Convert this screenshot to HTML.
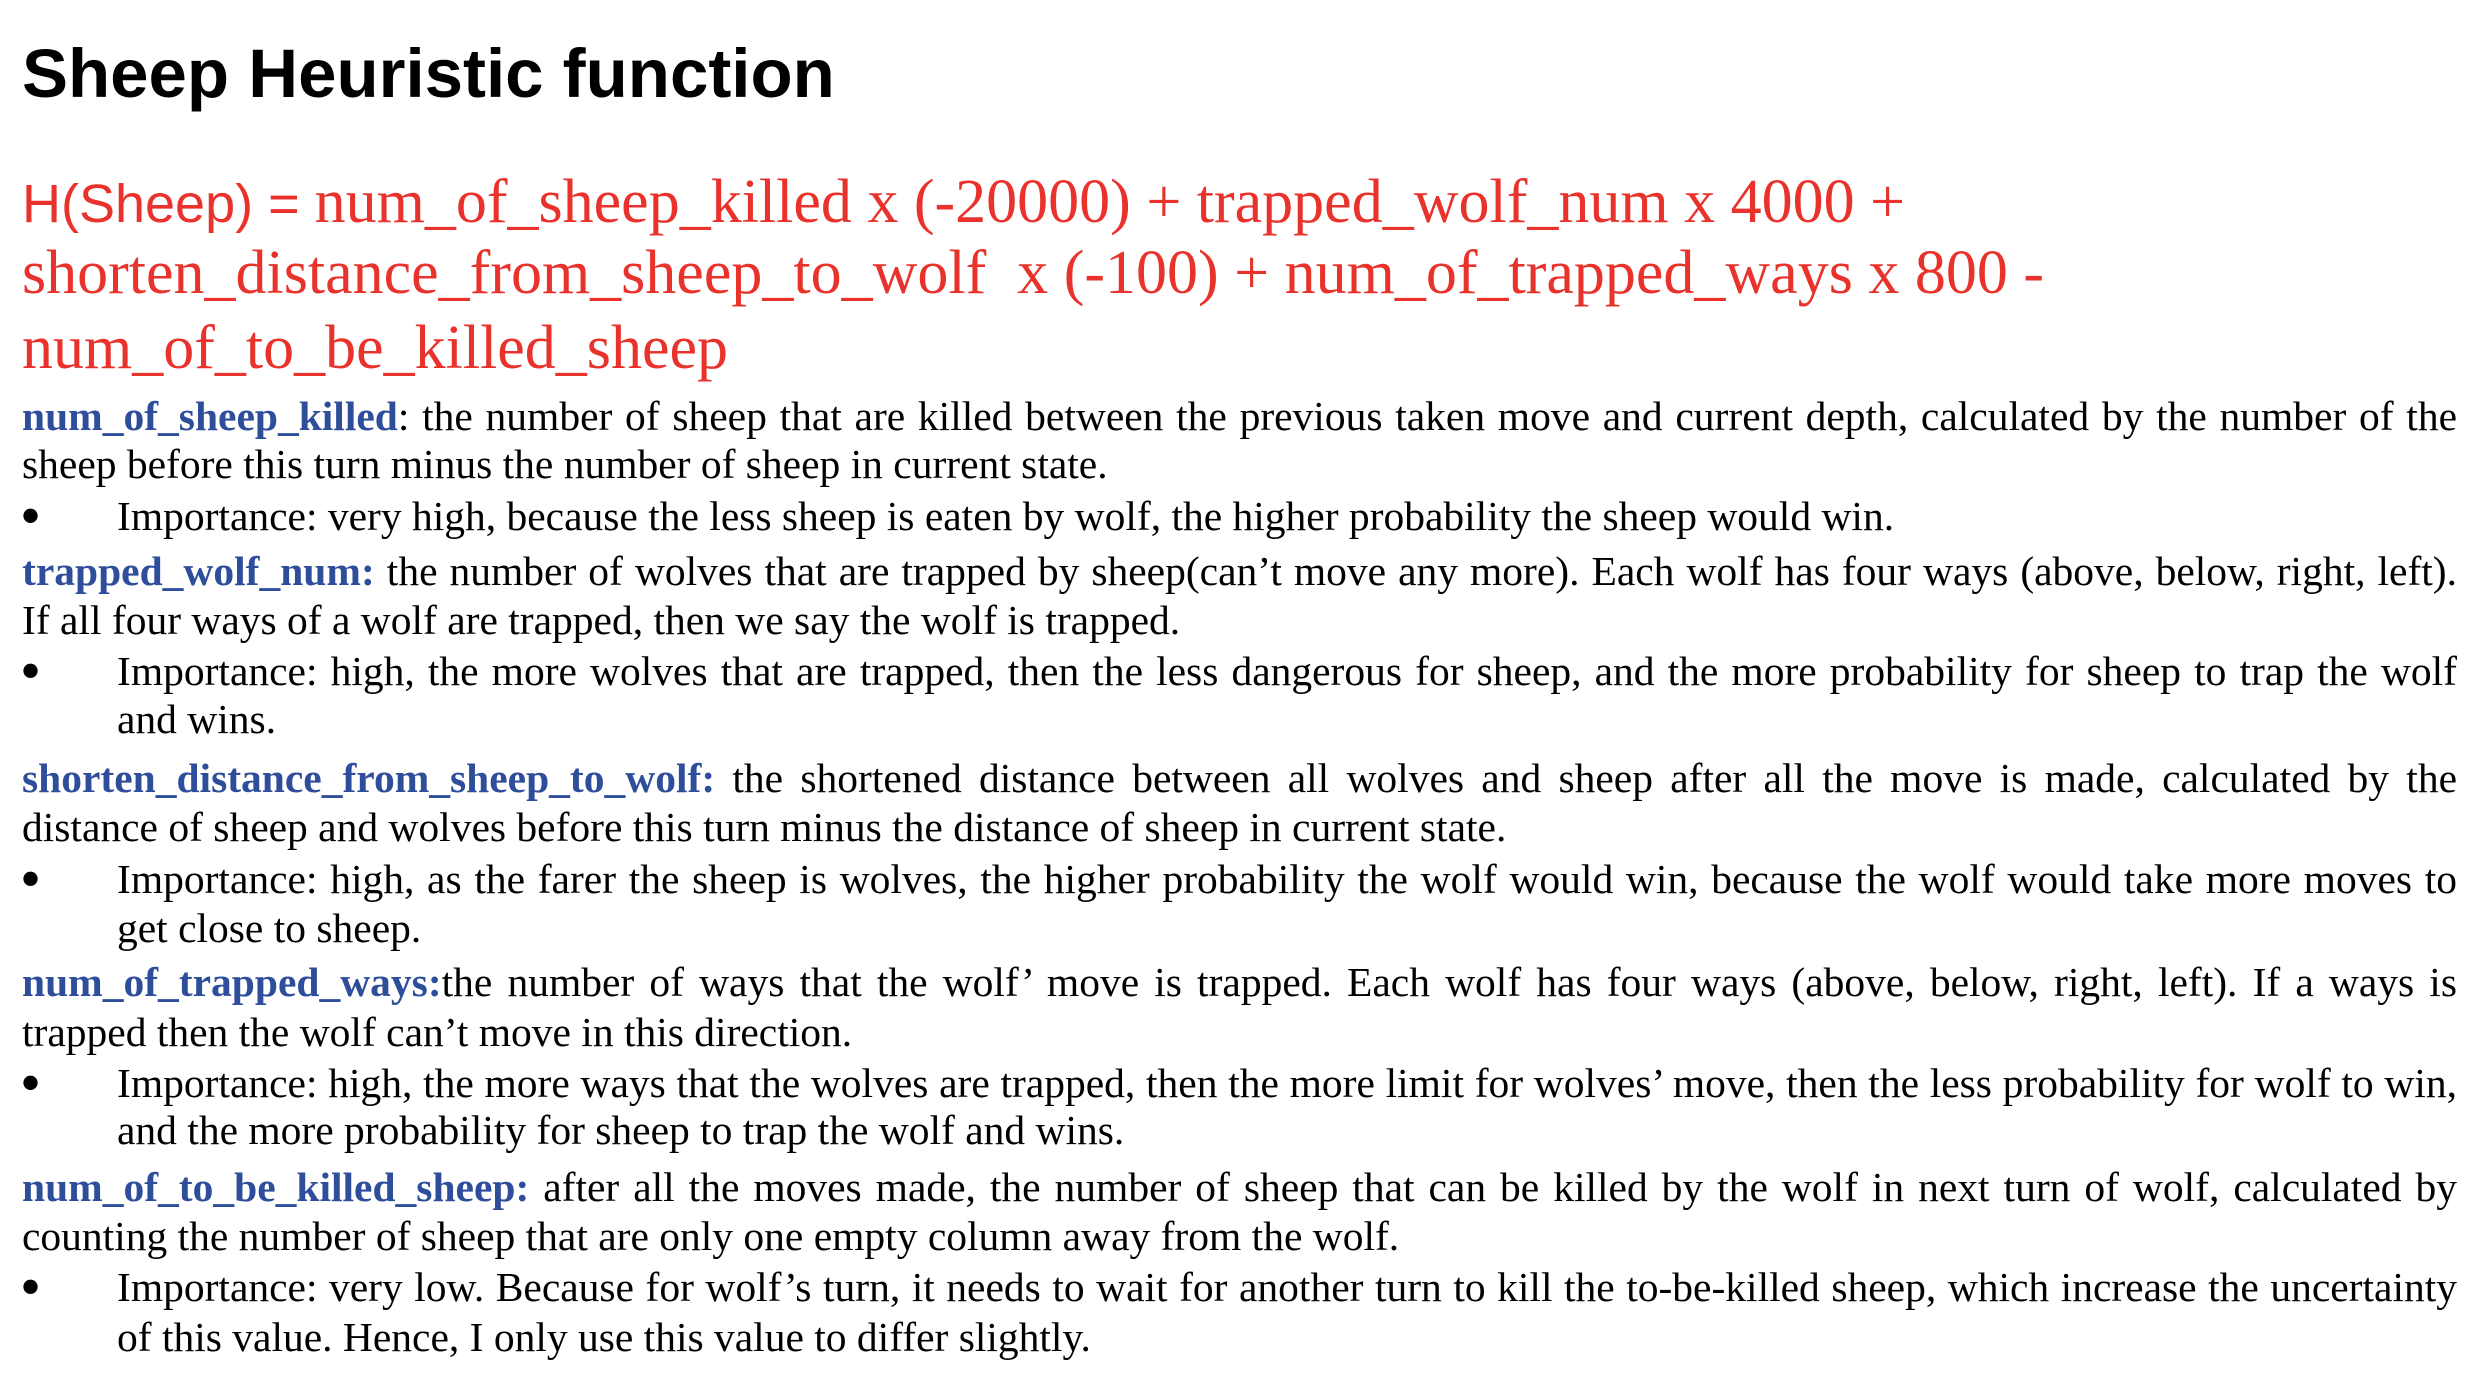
<!DOCTYPE html>
<html><head><meta charset="utf-8"><style>
body{margin:0;width:2478px;height:1388px;background:#fff;position:relative;overflow:hidden;font-family:"Liberation Serif",serif;color:#000}
.t{position:absolute;left:22px;top:34px;font:bold 69px "Liberation Sans",sans-serif;white-space:nowrap}
.f{position:absolute;left:22px;font-size:62px;color:#e8322b;white-space:nowrap;line-height:70px}
.f .s{font-family:"Liberation Sans",sans-serif;font-size:54px}
.l{position:absolute;left:22px;width:2435px;font-size:41.5px;line-height:50px;white-space:nowrap}
.j{text-align:justify;text-align-last:justify}
.b{left:117px;width:2340px}
.d{position:absolute;left:20px;font-size:60px;line-height:50px}
.k{color:#2e4d9b;font-weight:bold}
</style></head><body>
<div class="t">Sheep Heuristic function</div>
<div class="f" style="top:167px"><span class="s">H(Sheep) = </span>num_of_sheep_killed x (-20000) + trapped_wolf_num x 4000 +</div>
<div class="f" style="top:238px">shorten_distance_from_sheep_to_wolf&nbsp; x (-100) + num_of_trapped_ways x 800 -</div>
<div class="f" style="top:313px">num_of_to_be_killed_sheep</div>

<div class="l j" style="top:391px"><span class="k">num_of_sheep_killed</span>: the number of sheep that are killed between the previous taken move and current depth, calculated by the number of the</div>
<div class="l" style="top:439px">sheep before this turn minus the number of sheep in current state.</div>
<div class="d" style="top:491px">•</div>
<div class="l b" style="top:491px">Importance: very high, because the less sheep is eaten by wolf, the higher probability the sheep would win.</div>

<div class="l j" style="top:546px"><span class="k">trapped_wolf_num:</span> the number of wolves that are trapped by sheep(can’t move any more). Each wolf has four ways (above, below, right, left).</div>
<div class="l" style="top:595px">If all four ways of a wolf are trapped, then we say the wolf is trapped.</div>
<div class="d" style="top:646px">•</div>
<div class="l b j" style="top:646px">Importance: high, the more wolves that are trapped, then the less dangerous for sheep, and the more probability for sheep to trap the wolf</div>
<div class="l b" style="top:694px">and wins.</div>

<div class="l j" style="top:753px"><span class="k">shorten_distance_from_sheep_to_wolf:</span> the shortened distance between all wolves and sheep after all the move is made, calculated by the</div>
<div class="l" style="top:802px">distance of sheep and wolves before this turn minus the distance of sheep in current state.</div>
<div class="d" style="top:854px">•</div>
<div class="l b j" style="top:854px">Importance: high, as the farer the sheep is wolves, the higher probability the wolf would win, because the wolf would take more moves to</div>
<div class="l b" style="top:903px">get close to sheep.</div>

<div class="l j" style="top:957px"><span class="k">num_of_trapped_ways:</span>the number of ways that the wolf’ move is trapped. Each wolf has four ways (above, below, right, left). If a ways is</div>
<div class="l" style="top:1007px">trapped then the wolf can’t move in this direction.</div>
<div class="d" style="top:1058px">•</div>
<div class="l b j" style="top:1058px">Importance: high, the more ways that the wolves are trapped, then the more limit for wolves’ move, then the less probability for wolf to win,</div>
<div class="l b" style="top:1105px">and the more probability for sheep to trap the wolf and wins.</div>

<div class="l j" style="top:1162px"><span class="k">num_of_to_be_killed_sheep:</span> after all the moves made, the number of sheep that can be killed by the wolf in next turn of wolf, calculated by</div>
<div class="l" style="top:1211px">counting the number of sheep that are only one empty column away from the wolf.</div>
<div class="d" style="top:1262px">•</div>
<div class="l b j" style="top:1262px">Importance: very low. Because for wolf’s turn, it needs to wait for another turn to kill the to-be-killed sheep, which increase the uncertainty</div>
<div class="l b" style="top:1312px">of this value. Hence, I only use this value to differ slightly.</div>
</body></html>
